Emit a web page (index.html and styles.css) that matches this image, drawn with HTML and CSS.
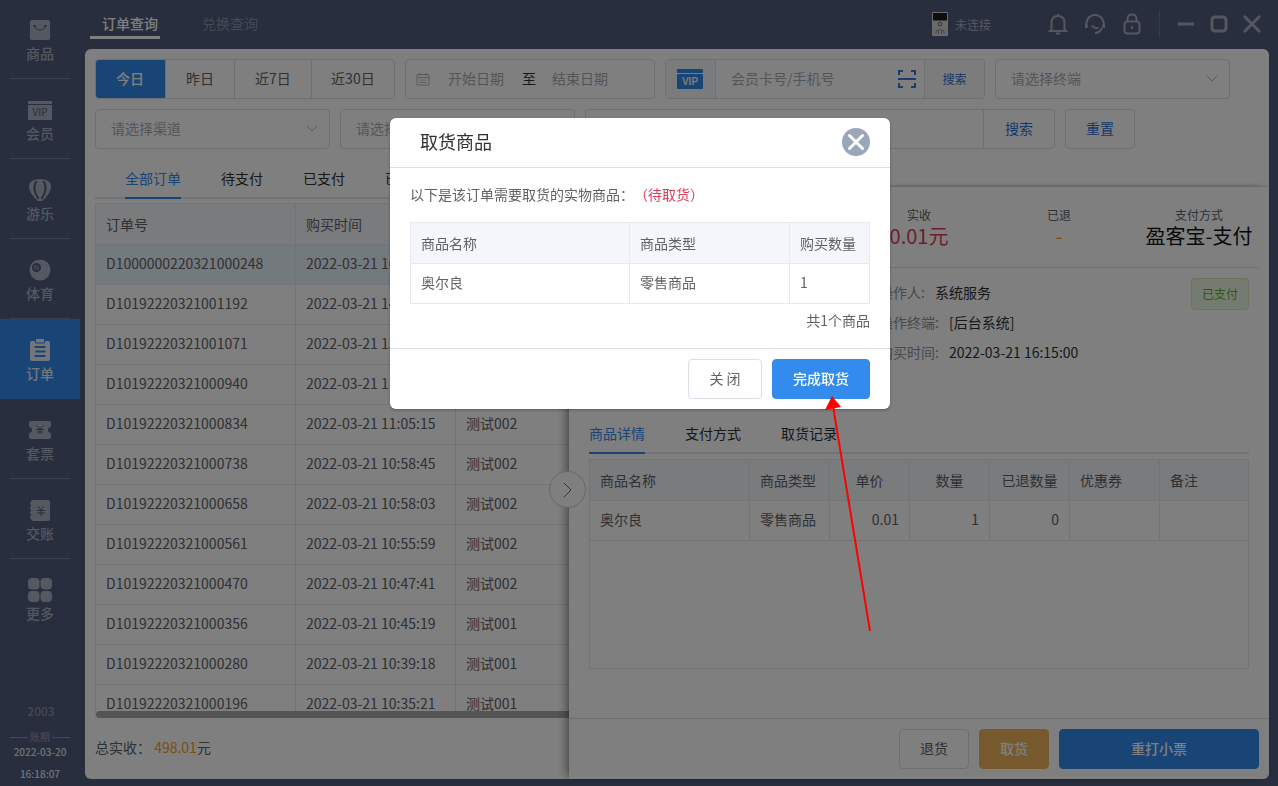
FILE: index.html
```html
<!DOCTYPE html>
<html lang="zh-CN">
<head>
<meta charset="utf-8">
<title>订单查询</title>
<link rel="stylesheet" href="styles.css">
</head>
<body>
<div class="app">
  <aside class="sidebar">
    <nav class="menu">
      <a class="menu-item" href="#"><svg class="menu-icon" viewBox="0 0 24 24"><rect x="2" y="2" width="20" height="20" rx="2" fill="currentColor"/><circle cx="6.500" cy="8" r="1.200" class="ink-fill"/><circle cx="17.500" cy="8" r="1.200" class="ink-fill"/><path d="M7 9.500q5 5.500 10 0" class="ink"/></svg><span>商品</span></a>
      <a class="menu-item" href="#"><svg class="menu-icon" viewBox="0 0 24 24"><rect x="0" y="3" width="24" height="3" fill="currentColor"/><rect x="0" y="7" width="24" height="15" fill="currentColor"/><text x="12" y="18" class="vip-mark">VIP</text></svg><span>会员</span></a>
      <a class="menu-item" href="#"><svg class="menu-icon" viewBox="0 0 24 24"><path d="M12 1C5 1 1 4 1 8.500 1 13 5 19 10 23h4c5-4 9-10 9-14.500C23 4 19 1 12 1z" fill="currentColor"/><path d="M8.500 3C5 8 6.500 15 10.500 21M15.500 3c3.500 5 2 12-2 18" class="ink wide"/></svg><span>游乐</span></a>
      <a class="menu-item" href="#"><svg class="menu-icon" viewBox="0 0 24 24"><circle cx="12" cy="12" r="10.500" fill="currentColor"/><circle cx="8.500" cy="9.500" r="3.500" class="ink bold"/><circle cx="9.300" cy="8.700" r="1.200" class="ink"/><circle cx="7.900" cy="10.500" r="1.200" class="ink"/></svg><span>体育</span></a>
      <a class="menu-item active" href="#"><svg class="menu-icon" viewBox="0 0 24 24"><rect x="2" y="3" width="20" height="20" rx="2" fill="currentColor"/><path d="M8 1h8v3H8z" fill="currentColor"/><path d="M6.500 9h11M7.500 13.500h10M6.500 18h11" class="ink"/><path d="M7.500 3v2h9V3" class="ink thin"/></svg><span>订单</span></a>
      <a class="menu-item" href="#"><svg class="menu-icon" viewBox="0 0 24 24"><path d="M3 3h18q2 0 2 2v4a3 3 0 0 0 0 6v4q0 2-2 2H3q-2 0-2-2v-4a3 3 0 0 0 0-6V5q0-2 2-2z" fill="currentColor"/><path d="M9 7.500l3 3.500 3-3.500M8 11.500h8M9 14h6M12 11v5" class="ink"/></svg><span>套票</span></a>
      <a class="menu-item" href="#"><svg class="menu-icon" viewBox="0 0 24 24"><rect x="3" y="2" width="19" height="21" rx="2" fill="currentColor"/><path d="M2 5.500h2M2 10h2M2 14.500h2M2 19h2" class="binder"/><path d="M10 8l3 4 3-4M9 12.500h8M9 15h8M13 12v6" class="ink"/></svg><span>交账</span></a>
      <a class="menu-item" href="#"><svg class="menu-icon" viewBox="0 0 24 24" fill="currentColor"><path d="M4 0h4q3.500 0 3.500 4v3.500q0 4-3.500 4H4q-4 0-4-4V4q0-4 4-4zM16 0h4q4 0 4 4v3.500q0 4-4 4h-3q-4 0-4.500-4V4q0-4 3.500-4zM4 13h4q3.500 0 3.500 3.500V20q0 4-3.500 4H4q-4 0-4-4v-3q0-4 4-4zM16 13h4q4 0 4 4v3q0 4-4 4h-4q-3.500 0-3.500-4v-3.500q0-3.500 3.500-3.500z"/></svg><span>更多</span></a>
    </nav>
    <div class="shift">
      <span class="shift-no">2003</span>
      <span class="shift-label">账期</span>
      <span class="shift-time">2022-03-20</span>
      <span class="shift-time">16:18:07</span>
    </div>
  </aside>

  <div class="workspace">
    <header class="topbar">
      <nav class="page-tabs">
        <a class="page-tab active" href="#">订单查询</a>
        <a class="page-tab" href="#">兑换查询</a>
      </nav>
      <div class="status">
        <svg class="reader" viewBox="0 0 16 24"><rect width="16" height="24" rx="1" fill="#d5d5d5"/><rect x="1" y="1" width="14" height="7.500" fill="#1c1c1c"/><circle cx="8" cy="12" r="1.800" fill="none" stroke="#666"/><path d="M4 22v-3q4-3 8 0v3M6.500 22v-3M9.500 22v-3" fill="none" stroke="#8a8a8a"/></svg>
        <span>未连接</span>
      </div>
      <div class="tools">
        <button class="icon-btn" aria-label="通知"><svg viewBox="0 0 24 24"><path d="M5.500 17.500V11c0-5 3-7 6.500-7s6.500 2 6.500 7v6.500l1.500 1.500H4z"/><path d="M12 2v2M10 21.500h4"/></svg></button>
        <button class="icon-btn" aria-label="客服"><svg viewBox="0 0 24 24"><path d="M4.500 15.500a8.500 8.500 0 1 1 15 0M12 21q4.500 0 7-5"/><path d="M3 11v5M21 11v5M9 13.500q2.500 4 6.500 2"/></svg></button>
        <button class="icon-btn" aria-label="锁定"><svg viewBox="0 0 24 24"><rect x="4.500" y="9.500" width="15" height="12" rx="3"/><path d="M7.500 9.500V7q0-4.500 4.500-4.500t4.500 4.500v2.500M12 14v3"/></svg></button>
      </div>
      <div class="window-tools">
        <button class="icon-btn" aria-label="最小化"><svg viewBox="0 0 24 24"><path d="M4 12h16"/></svg></button>
        <button class="icon-btn" aria-label="最大化"><svg viewBox="0 0 24 24"><rect x="5" y="5" width="14" height="14" rx="3"/></svg></button>
        <button class="icon-btn" aria-label="关闭窗口"><svg viewBox="0 0 24 24"><path d="M4 4l16 16M20 4L4 20"/></svg></button>
      </div>
    </header>

    <main class="panel">
      <form class="filters">
        <div class="filter-row">
          <div class="segmented">
            <button type="button" class="segment on">今日</button>
            <button type="button" class="segment">昨日</button>
            <button type="button" class="segment">近7日</button>
            <button type="button" class="segment">近30日</button>
          </div>
          <div class="date-range box">
            <svg class="calendar" viewBox="0 0 14 14"><path d="M1 2.500h12v10.500H1zM1 5.500h12M4 1v3M10 1v3M3.500 8h7M3.500 10.500h7"/></svg>
            <input aria-label="开始日期" placeholder="开始日期">
            <span>至</span>
            <input aria-label="结束日期" placeholder="结束日期">
          </div>
          <div class="member box">
            <span class="addon"><svg class="vip-card" viewBox="0 0 26 20"><rect width="26" height="4" rx="1"/><rect y="5" width="26" height="15" rx="1"/><text x="13" y="16">VIP</text></svg></span>
            <input aria-label="会员卡号/手机号" placeholder="会员卡号/手机号">
            <svg class="scan" viewBox="0 0 18 18"><path d="M1 5V1h4M13 1h4v4M17 13v4h-4M5 17H1v-4M0 9h18"/></svg>
            <button type="button" class="small-search">搜索</button>
          </div>
          <select class="box" aria-label="终端"><option>请选择终端</option></select>
        </div>
        <div class="filter-row">
          <select class="box" aria-label="渠道"><option>请选择渠道</option></select>
          <select class="box" aria-label="状态"><option>请选择状态</option></select>
          <div class="keyword box">
            <input aria-label="关键字">
            <button type="button" class="search">搜索</button>
          </div>
          <button type="button" class="btn reset">重置</button>
        </div>
      </form>

      <nav class="tabs order-tabs">
        <a class="tab active" href="#">全部订单</a>
        <a class="tab" href="#">待支付</a>
        <a class="tab" href="#">已支付</a>
        <a class="tab" href="#">已取消</a>
      </nav>

      <div class="orders">
        <table class="grid">
          <colgroup><col class="w200"><col class="w160"><col></colgroup>
          <thead><tr><th>订单号</th><th>购买时间</th><th>操作人</th></tr></thead>
          <tbody>
            <tr class="current"><td>D1000000220321000248</td><td>2022-03-21 16:15:00</td><td>系统服务</td></tr>
            <tr><td>D10192220321001192</td><td>2022-03-21 14:32:16</td><td>测试002</td></tr>
            <tr><td>D10192220321001071</td><td>2022-03-21 13:21:40</td><td>测试002</td></tr>
            <tr><td>D10192220321000940</td><td>2022-03-21 11:42:08</td><td>测试002</td></tr>
            <tr><td>D10192220321000834</td><td>2022-03-21 11:05:15</td><td>测试002</td></tr>
            <tr><td>D10192220321000738</td><td>2022-03-21 10:58:45</td><td>测试002</td></tr>
            <tr><td>D10192220321000658</td><td>2022-03-21 10:58:03</td><td>测试002</td></tr>
            <tr><td>D10192220321000561</td><td>2022-03-21 10:55:59</td><td>测试002</td></tr>
            <tr><td>D10192220321000470</td><td>2022-03-21 10:47:41</td><td>测试002</td></tr>
            <tr><td>D10192220321000356</td><td>2022-03-21 10:45:19</td><td>测试001</td></tr>
            <tr><td>D10192220321000280</td><td>2022-03-21 10:39:18</td><td>测试001</td></tr>
            <tr><td>D10192220321000196</td><td>2022-03-21 10:35:21</td><td>测试001</td></tr>
          </tbody>
        </table>
        <div class="scrollbar"></div>
      </div>
      <footer class="total">总实收： <span class="amount">498.01</span>元</footer>

      <section class="drawer">
        <button class="collapse" aria-label="收起"><svg viewBox="0 0 16 16"><path d="M4 1l7 7-7 7"/></svg></button>
        <dl class="summary">
          <div class="figure"><dt>实收</dt><dd class="red">0.01元</dd></div>
          <div class="figure"><dt>已退</dt><dd class="orange">-</dd></div>
          <div class="figure"><dt>支付方式</dt><dd>盈客宝-支付</dd></div>
        </dl>
        <div class="info">
          <dl class="facts">
            <div class="fact"><dt>操作人:</dt><dd>系统服务</dd></div>
            <div class="fact"><dt>操作终端:</dt><dd>[后台系统]</dd></div>
            <div class="fact"><dt>购买时间:</dt><dd>2022-03-21 16:15:00</dd></div>
          </dl>
          <span class="tag">已支付</span>
        </div>
        <nav class="tabs">
          <a class="tab active" href="#">商品详情</a>
          <a class="tab" href="#">支付方式</a>
          <a class="tab" href="#">取货记录</a>
        </nav>
        <div class="goods">
          <table class="grid">
            <colgroup><col class="w160"><col class="w80"><col class="w80"><col class="w80"><col class="w80"><col class="w90"><col></colgroup>
            <thead><tr><th>商品名称</th><th>商品类型</th><th class="mid">单价</th><th class="mid">数量</th><th class="mid">已退数量</th><th>优惠券</th><th>备注</th></tr></thead>
            <tbody><tr><td>奥尔良</td><td>零售商品</td><td class="num">0.01</td><td class="num">1</td><td class="num">0</td><td></td><td></td></tr></tbody>
          </table>
        </div>
        <footer class="actions">
          <button class="btn w70">退货</button>
          <button class="btn warn w70">取货</button>
          <button class="btn primary w200">重打小票</button>
        </footer>
      </section>
    </main>
  </div>
</div>

<div class="overlay">
  <div class="modal" role="dialog" aria-modal="true" aria-labelledby="modal-title">
    <header class="modal-head">
      <h2 id="modal-title">取货商品</h2>
      <button class="modal-close" aria-label="关闭"><svg viewBox="0 0 28 28"><circle cx="14" cy="14" r="14"/><path d="M7.500 7.500l13 13M20.500 7.500l-13 13"/></svg></button>
    </header>
    <div class="modal-body">
      <p class="lead">以下是该订单需要取货的实物商品：<span class="red">（待取货）</span></p>
      <div class="pickup">
        <table class="grid">
          <colgroup><col class="w219"><col class="w160"><col></colgroup>
          <thead><tr><th>商品名称</th><th>商品类型</th><th>购买数量</th></tr></thead>
          <tbody><tr><td>奥尔良</td><td>零售商品</td><td>1</td></tr></tbody>
        </table>
      </div>
      <p class="count">共1个商品</p>
    </div>
    <footer class="modal-foot">
      <button class="btn w74">关 闭</button>
      <button class="btn primary w98">完成取货</button>
    </footer>
    <svg class="pointer" viewBox="0 0 50 236"><path d="M8 10L45 235" stroke="#f00" stroke-width="2"/><path d="M7 0L16 11 0 14z" fill="#f00"/></svg>
  </div>
</div>
</body>
</html>
```

FILE: styles.css
```css
* { box-sizing: border-box; }

body {
  margin: 0;
  font: 14px/20px "Noto Sans CJK SC", sans-serif;
  color: #606266;
  text-spacing-trim: space-all;
}

button, input, select { font: inherit; color: inherit; margin: 0; padding: 0; border: 0; background: none; }
button { cursor: pointer; white-space: nowrap; }
input { min-width: 0; outline: 0; padding-bottom: 2px; }
input::placeholder { color: #a8abb2; opacity: 1; }
a { color: inherit; text-decoration: none; }
dl, dd, p, h2 { margin: 0; }
svg { display: block; flex: none; }

.red { color: #dd3c5c; }
.orange { color: #f59a23; }

.app {
  display: flex;
  height: 100vh;
  background: #505c7c;
}

/* Sidebar */
.sidebar {
  flex: none;
  display: flex;
  flex-direction: column;
  width: 80px;
  color: #a9b0c0;
}
.menu { flex: 1; min-height: 0; overflow: hidden; }
.menu-item {
  position: relative;
  display: flex;
  flex-direction: column;
  align-items: center;
  gap: 1px;
  height: 80px;
  padding-top: 19px;
  font-weight: 500;
}
.menu-item:first-child { height: 79px; padding-top: 18px; }
.menu-item:not(:last-child)::after {
  content: "";
  position: absolute;
  left: 10px;
  right: 10px;
  bottom: 0;
  border-bottom: 1px solid #76809a;
}
.menu-item.active { background: #328bed; color: #e6ecf5; }
.menu-item.active::after { display: none; }
.menu-icon { width: 24px; height: 24px; }
.ink { fill: none; stroke: #505c7c; stroke-width: 1; }
.ink.wide { stroke-width: 2; }
.ink.bold { stroke-width: 2; }
.active .ink { stroke: #328bed; stroke-width: 2; }
.active .thin { stroke-width: 1; }
.ink-fill { fill: #505c7c; }
.binder { stroke: currentColor; stroke-width: 2; }
.vip-mark { font: 400 10px "Noto Sans CJK SC", sans-serif; text-anchor: middle; fill: #505c7c; }

.shift {
  display: flex;
  flex-direction: column;
  align-items: center;
  font-size: 10px;
  font-weight: 500;
  line-height: 16px;
  padding-bottom: 4px;
}
.shift-no { color: #8a92a6; font-size: 12px; margin-bottom: 11px; padding-left: 2px; }
.shift-label {
  display: flex;
  align-items: center;
  gap: 2px;
  width: 60px;
  color: #8a92a6;
  line-height: 14px;
}
.shift-label::before, .shift-label::after { content: ""; flex: 1; border-top: 1px solid #8a92a6; }
.shift-time { color: #e0e3ea; }
.shift-time + .shift-time { margin-top: 6px; }

/* Top bar */
.workspace {
  flex: 1;
  min-width: 0;
  display: flex;
  flex-direction: column;
  padding: 0 9px 7px 5px;
}
.topbar {
  flex: none;
  display: flex;
  align-items: center;
  height: 49px;
  padding-bottom: 2px;
  color: #a9b0c0;
}
.page-tabs { display: flex; gap: 20px; margin-left: 5px; margin-right: auto; align-self: flex-start; }
.page-tab { padding: 13px 0 3px 12px; width: 70px; border-bottom: 3px solid transparent; color: #8a92a6; white-space: nowrap; }
.page-tab + .page-tab { width: 80px; padding-left: 22px; }
.page-tab.active { color: #fff; font-weight: 500; border-color: #fff; }
.status { display: flex; align-items: center; gap: 7px; font-size: 12px; margin-right: 55px; }
.status span { padding-top: 3px; }
.reader { width: 16px; height: 24px; }
.tools { display: flex; gap: 13px; padding-right: 15px; border-right: 1px solid #6d7690; height: 28px; align-items: center; }
.window-tools { display: flex; gap: 9px; padding: 0 5px 0 14px; }
.icon-btn svg { width: 24px; height: 24px; fill: none; stroke: #a9aebb; stroke-width: 2; }
.window-tools svg { stroke-width: 3; }

/* Panel and filters */
.panel {
  position: relative;
  flex: 1;
  min-height: 0;
  display: flex;
  flex-direction: column;
  border-radius: 6px;
  background: #fff;
}
.filters { flex: none; display: flex; flex-direction: column; gap: 10px; padding: 10px 10px 0; }
.filter-row { display: flex; gap: 10px; height: 40px; }
.box, .btn, .segmented { border: 1px solid #dcdfe6; border-radius: 4px; }
.segmented { display: flex; overflow: hidden; width: 300px; }
.segment { padding: 0 20px 2px; border-left: 1px solid #dcdfe6; }
.segment:last-child { flex: 1; padding: 0 0 2px; }
.segment.on { width: 70px; border-left: 0; margin: -1px 0 -1px -1px; background: #328bed; color: #fff; font-weight: 500; }
.date-range { display: flex; align-items: center; width: 250px; padding-left: 10px; color: #303133; }
.date-range input { width: 56px; }
.date-range span { margin: 0 16px 0 18px; padding-bottom: 2px; }
.calendar { width: 14px; height: 14px; margin-right: 18px; fill: none; stroke: #b4b8c0; }
.member { display: flex; align-items: center; width: 320px; overflow: hidden; }
.addon { display: flex; align-items: center; justify-content: center; align-self: stretch; width: 50px; padding-right: 1px; background: #f5f7fa; border-right: 1px solid #dcdfe6; }
.vip-card { width: 26px; height: 20px; fill: #328bed; }
.vip-card text { font: 700 10px "Liberation Sans", sans-serif; text-anchor: middle; fill: #f5f7fa; }
.member input { flex: 1; padding-left: 15px; }
.scan { width: 18px; height: 18px; margin-right: 8px; fill: none; stroke: #3a78d6; stroke-width: 2; }
.small-search { align-self: stretch; width: 60px; border-left: 1px solid #dcdfe6; background: #f8f9fb; color: #2f6fd6; font-size: 12px; }
select.box {
  appearance: none;
  width: 235px;
  padding: 0 15px 2px;
  color: #a8abb2;
  background: url("data:image/svg+xml,%3Csvg xmlns='http://www.w3.org/2000/svg' width='12' height='12' fill='none' stroke='%23b4b8c0'%3E%3Cpath d='M1 3l5 5 5-5'/%3E%3C/svg%3E") right 11px center no-repeat;
}
.keyword { display: flex; width: 470px; }
.keyword input { flex: 1; }
.search { width: 71px; padding-bottom: 3px; border-left: 1px solid #dcdfe6; color: #2f6fd6; }
.reset { width: 70px; color: #2f6fd6; }

/* Tabs */
.tabs { display: flex; flex: none; gap: 40px; height: 40px; border-bottom: 2px solid #e4e7ed; color: #303133; }
.tab { height: 40px; line-height: 38px; white-space: nowrap; }
.tab.active { color: #328bed; border-bottom: 2px solid #328bed; }
.order-tabs { margin: 10px 10px 4px; padding-left: 30px; }

/* Tables */
.grid { width: 100%; table-layout: fixed; border-collapse: separate; border-spacing: 0; }
.grid th, .grid td { height: 40px; padding: 0 10px; border: solid #e6e9ef; border-width: 0 1px 1px 0; text-align: left; font-weight: 400; white-space: nowrap; }
.grid td { padding-bottom: 3px; }
.grid th { height: 41px; background: #f4f6fb; }
.grid .mid { text-align: center; }
.grid .num { text-align: right; }
.current td { background: #e9f2fd; }
.w80 { width: 80px; }
.w90 { width: 90px; }
.w160 { width: 160px; }
.w200 { width: 200px; }
.w219 { width: 219px; }
.orders { position: relative; flex: 1; min-height: 0; overflow: hidden; margin: 0 10px; border: solid #e6e9ef; border-width: 1px 0 0 1px; }
.scrollbar { position: absolute; left: 0; bottom: 0; width: 100%; height: 7px; border-radius: 4px; background: #a9a9a9; }
.total { flex: none; height: 61px; padding: 19px 10px; }
.amount { color: #f59a23; }

/* Order drawer */
.drawer {
  position: absolute;
  top: 138px;
  right: 0;
  bottom: 0;
  width: 700px;
  display: flex;
  flex-direction: column;
  background: #fff;
  border-radius: 0 0 6px 0;
  box-shadow: -6px 0 10px -3px rgba(0, 0, 0, .4), 0 -1px 3px rgba(0, 0, 0, .15);
}
.collapse {
  position: absolute;
  left: -20px;
  top: 284px;
  display: grid;
  place-items: center;
  width: 37px;
  height: 37px;
  border: 1px solid #ccd0d8;
  border-radius: 50%;
  background: #fff;
}
.collapse svg { width: 16px; height: 16px; fill: none; stroke: #606266; }
.summary { display: flex; justify-content: flex-end; height: 81px; margin: 0 10px; padding-top: 18px; border-bottom: 1px solid #dcdfe6; }
.figure { width: 140px; text-align: center; white-space: nowrap; }
.figure:last-child { margin-right: -10px; }
.figure dt { font-size: 12px; }
.figure dd { font-size: 20px; line-height: 22px; }
.figure dd:not([class]) { color: #111; }
.info { display: flex; justify-content: space-between; align-items: flex-start; min-height: 146px; padding: 10px 20px 0 310px; }
.fact { display: flex; gap: 10px; line-height: 28px; padding-bottom: 2px; }
.fact dt { color: #909399; }
.fact dd { color: #303133; }
.tag { padding: 5px 10px; border: 1px solid #d0e8c0; border-radius: 4px; background: #eaf7e2; color: #52b52a; font-size: 12px; }
.drawer .tabs { margin: 0 20px 5px; }
.goods { height: 210px; margin: 0 20px; border: 1px solid #e6e9ef; }
.goods th:last-child, .goods td:last-child { border-right: 0; }
.goods .mid { padding: 0; }
.actions { display: flex; justify-content: flex-end; gap: 10px; margin-top: auto; padding: 10px; border-top: 1px solid #dcdfe6; }

/* Buttons */
.btn { height: 40px; padding-bottom: 2px; background: #fff; }
.btn.primary { border-color: #328bed; background: #328bed; color: #fff; font-weight: 500; }
.btn.warn { border-color: #ecb55c; background: #ecb55c; color: #fff; font-weight: 500; }
.w70 { width: 70px; }
.w74 { width: 74px; }
.w98 { width: 98px; }
.btn.w200 { width: 200px; }

/* Modal */
.overlay { position: fixed; inset: 0; padding: 15vh 0 0 2px; background: rgba(0, 0, 0, .5); }
.modal { position: relative; width: 500px; margin: 0 auto; border-radius: 6px; background: #fff; box-shadow: 0 1px 3px rgba(0, 0, 0, .3); }
.modal-head { display: flex; align-items: center; justify-content: space-between; height: 50px; padding: 0 20px 0 30px; border-bottom: 1px solid #dcdfe6; }
.modal-head h2 { padding-bottom: 2px; font-size: 18px; line-height: 24px; font-weight: 400; color: #303133; }
.modal-close svg { width: 28px; height: 28px; fill: #9ba6b8; }
.modal-close path { stroke: #fff; stroke-width: 3; stroke-linecap: round; }
.modal-body { padding: 16px 20px 18px; }
.lead { margin-bottom: 18px; }
.pickup { border: solid #e6e9ef; border-width: 1px 0 0 1px; }
.count { margin-top: 6px; text-align: right; }
.modal-foot { display: flex; justify-content: flex-end; gap: 10px; padding: 10px 20px; border-top: 1px solid #dcdfe6; }
.pointer { position: absolute; left: 435px; top: 278px; width: 50px; height: 236px; pointer-events: none; }
```
